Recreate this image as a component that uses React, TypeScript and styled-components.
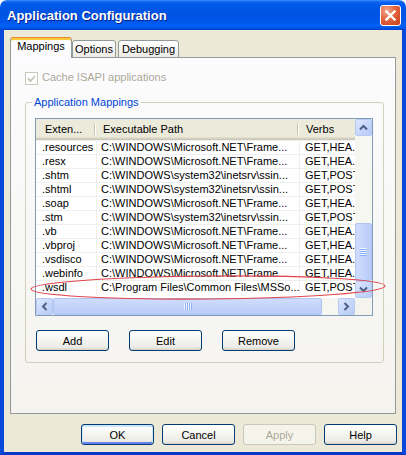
import React from "react";
import styled, { createGlobalStyle, css } from "styled-components";

const GlobalStyle = createGlobalStyle`
  * { box-sizing: border-box; }
  html, body { margin: 0; padding: 0; background: #ffffff; }
  body { font-family: "Liberation Sans", Arial, sans-serif; font-size: 11px; color: #000; }
`;

const FONT = `"Liberation Sans", Arial, sans-serif`;

const Window = styled.div`
  position: relative;
  width: 406px;
  height: 455px;
  display: flex;
  flex-direction: column;
  overflow: hidden;
  border-radius: 7px 7px 0 0;
  font-family: ${FONT};
  font-size: 11px;
`;

const TitleBar = styled.div`
  height: 30px;
  flex: none;
  display: flex;
  align-items: center;
  justify-content: space-between;
  padding: 1px 5px 0 7px;
  background: linear-gradient(
    180deg,
    #3c8ffe 0px,
    #0d62ef 2px,
    #0058ea 5px,
    #0054e3 14px,
    #0057ea 22px,
    #0062f6 26px,
    #0055e6 28px,
    #0040ca 30px
  );
`;

const Title = styled.div`
  font-family: ${FONT};
  font-weight: bold;
  font-size: 13px;
  color: #ffffff;
  text-shadow: 1px 1px 0 #0a1e8c;
`;

const CloseButton = styled.div`
  width: 21px;
  height: 21px;
  border: 1px solid #ffffff;
  border-radius: 3px;
  display: flex;
  align-items: center;
  justify-content: center;
  background: radial-gradient(circle at 30% 25%, #f3a68c 0%, #e2643f 45%, #c8411c 100%);
`;

const Body = styled.div`
  flex: 1;
  display: flex;
  flex-direction: column;
  background: #ece9d8;
  border-left: 4px solid #0849da;
  border-right: 4px solid #0849da;
  border-bottom: 3px solid #0838c8;
  padding: 7px 6px 0 6px;
`;

const TabStrip = styled.div`
  display: flex;
  align-items: flex-end;
  height: 21px;
  margin-bottom: -1px;
`;

const Tab = styled.div<{ $active?: boolean; $w: number; $gap?: number }>`
  position: relative;
  width: ${(p) => p.$w}px;
  margin-left: ${(p) => p.$gap ?? 0}px;
  height: ${(p) => (p.$active ? 21 : 18)}px;
  z-index: ${(p) => (p.$active ? 2 : 0)};
  border: 1px solid #919b9c;
  border-radius: 3px 3px 0 0;
  text-align: center;
  line-height: 13px;
  padding-top: 2px;
  color: #000;
  white-space: nowrap;
  ${(p) =>
    p.$active
      ? css`
          border-bottom: none;
          border-top-color: #e68b2c;
          background: #fcfcfe;
          box-shadow: inset 0 2px 0 #ffc73c;
        `
      : css`
          background: linear-gradient(180deg, #ffffff 0%, #f7f7f4 40%, #ecebe6 100%);
        `}
`;

const TabPanel = styled.div`
  position: relative;
  z-index: 1;
  height: 357px;
  flex: none;
  border: 1px solid #919b9c;
  background: linear-gradient(180deg, #fcfcfe 0%, #f4f3ee 100%);
  padding: 0 0 0 14px;
  display: flex;
  flex-direction: column;
`;

const CheckRow = styled.div`
  margin-top: 14px;
  height: 13px;
  display: flex;
  align-items: flex-start;
`;

const CheckBox = styled.div`
  width: 13px;
  height: 13px;
  flex: none;
  border: 1px solid #cac8bb;
  background: #ffffff;
  display: flex;
  align-items: center;
  justify-content: center;
`;

const CheckLabel = styled.span<{ $disabled?: boolean }>`
  margin-left: 4px;
  line-height: 11px;
  color: ${(p) => (p.$disabled ? "#aca899" : "#000")};
  white-space: nowrap;
`;

const GroupBox = styled.fieldset`
  margin: 10px 0 0 0;
  padding: 0;
  width: 359px;
  height: 268px;
  min-width: 0;
  border: 1px solid #d0d0bf;
  border-radius: 3px;
`;

const GroupLegend = styled.legend`
  margin-left: 6px;
  padding: 0 2px;
  line-height: 14px;
  font-size: 11px;
  color: #0046d5;
`;

const GroupInner = styled.div`
  padding: 9px 0 0 9px;
  display: flex;
  flex-direction: column;
`;

const ListView = styled.div`
  width: 338px;
  height: 198px;
  border: 1px solid #7f9db9;
  background: #ffffff;
  display: grid;
  grid-template-columns: 319px 17px;
  grid-template-rows: 179px 17px;
`;

const DataArea = styled.div`
  overflow: hidden;
  display: flex;
  flex-direction: column;
`;

const HeaderRow = styled.div`
  display: flex;
  flex: none;
  height: 21px;
  background: #ebeadb;
  box-shadow: inset 0 -1px 0 #cbc7b8, inset 0 -2px 0 #d6d2c2, inset 0 -3px 0 #e2decd;
`;

const HeaderCell = styled.div<{ $w?: number; $pad: number; $sep?: boolean }>`
  position: relative;
  flex: none;
  width: ${(p) => (p.$w ? `${p.$w}px` : "auto")};
  padding: 3px 0 0 ${(p) => p.$pad}px;
  line-height: 14px;
  white-space: nowrap;
  ${(p) =>
    p.$sep &&
    css`
      &::after {
        content: "";
        position: absolute;
        right: 2px;
        top: 4px;
        bottom: 5px;
        width: 1px;
        background: #c7c5b2;
        box-shadow: 1px 0 0 #ffffff;
      }
    `}
`;

const Row = styled.div`
  display: flex;
  flex: none;
  height: 14px;
  border-top: 1px solid #efefef;
`;

const Cell = styled.div<{ $w?: number; $pad: number; $grid?: boolean }>`
  flex: none;
  width: ${(p) => (p.$w ? `${p.$w}px` : "auto")};
  padding-left: ${(p) => p.$pad}px;
  line-height: 13px;
  white-space: nowrap;
  overflow: ${(p) => (p.$grid ? "hidden" : "visible")};
  border-right: ${(p) => (p.$grid ? "1px solid #efefef" : "none")};
`;

const VScroll = styled.div`
  display: flex;
  flex-direction: column;
  background: #f7f7f2;
`;

const HScroll = styled.div`
  display: flex;
  flex-direction: row;
  background: #f7f7f2;
`;

const Corner = styled.div`
  background: #f4f3ee;
`;

const ScrollButton = styled.div`
  width: 17px;
  height: 17px;
  flex: none;
  display: flex;
  align-items: center;
  justify-content: center;
  border: 1px solid #b7caf4;
  border-radius: 2px;
  background: linear-gradient(135deg, #dde7fe 0%, #c8d8fc 50%, #b7cbf7 100%);
`;

const Track = styled.div<{ $vertical?: boolean }>`
  flex: 1;
  display: flex;
  flex-direction: ${(p) => (p.$vertical ? "column" : "row")};
  justify-content: ${(p) => (p.$vertical ? "flex-end" : "flex-start")};
`;

const Thumb = styled.div<{ $vertical?: boolean; $size: number }>`
  flex: none;
  ${(p) =>
    p.$vertical
      ? css`
          height: ${p.$size}px;
          background: linear-gradient(90deg, #cfdcfd 0%, #c3d4fb 50%, #b8ccf8 100%);
        `
      : css`
          width: ${p.$size}px;
          background: linear-gradient(180deg, #cfdcfd 0%, #c3d4fb 50%, #b8ccf8 100%);
        `}
  border: 1px solid #b1c5f3;
  border-radius: 2px;
  display: flex;
  align-items: center;
  justify-content: center;
`;

const Grip = styled.div<{ $vertical?: boolean }>`
  width: ${(p) => (p.$vertical ? 7 : 8)}px;
  height: ${(p) => (p.$vertical ? 8 : 7)}px;
  background: repeating-linear-gradient(
    ${(p) => (p.$vertical ? "180deg" : "90deg")},
    #eef4fe 0px,
    #eef4fe 1px,
    #8cb0f8 1px,
    #8cb0f8 2px
  );
`;

const ButtonRow = styled.div`
  display: flex;
  gap: 20px;
  margin-top: 14px;
  padding-left: 1px;
`;

const Footer = styled.div`
  display: flex;
  justify-content: flex-end;
  gap: 8px;
  margin-top: 10px;
  margin-right: -1px;
`;

const Button = styled.button<{ $default?: boolean }>`
  width: 73px;
  height: 21px;
  padding: 0;
  font-family: ${FONT};
  font-size: 11px;
  color: #000;
  border: 1px solid #003c74;
  border-radius: 3px;
  background: linear-gradient(180deg, #ffffff 0%, #f5f5f1 45%, #ecebe6 85%, #d8d2c6 100%);
  ${(p) =>
    p.$default &&
    css`
      box-shadow: inset 0 1px 0 1px #cee7ff, inset 0 -1px 0 1px #6982ee;
    `}
  &:disabled {
    border-color: #c9c7ba;
    background: #f5f4ea;
    color: #aca899;
    box-shadow: none;
  }
`;

const Annotation = styled.svg`
  position: absolute;
  left: 0;
  top: 0;
  width: 406px;
  height: 455px;
  pointer-events: none;
  z-index: 10;
`;

type Dir = "up" | "down" | "left" | "right";
const rot: Record<Dir, number> = { up: 0, right: 90, down: 180, left: 270 };

function Arrow({ dir }: { dir: Dir }) {
  return (
    <svg width="9" height="9" viewBox="0 0 9 9" style={{ transform: `rotate(${rot[dir]}deg)` }}>
      <polyline points="1,6.5 4.5,3 8,6.5" fill="none" stroke="#4d6185" strokeWidth="2" />
    </svg>
  );
}

const NET = "C:\\WINDOWS\\Microsoft.NET\\Frame...";
const SYS = "C:\\WINDOWS\\system32\\inetsrv\\ssin...";
const HEA = "GET,HEA...";
const POS = "GET,POST";

const rows: [string, string, string][] = [
  [".resources", NET, HEA],
  [".resx", NET, HEA],
  [".shtm", SYS, POS],
  [".shtml", SYS, POS],
  [".soap", NET, HEA],
  [".stm", SYS, POS],
  [".vb", NET, HEA],
  [".vbproj", NET, HEA],
  [".vsdisco", NET, HEA],
  [".webinfo", NET, HEA],
  [".wsdl", "C:\\Program Files\\Common Files\\MSSo...", POS],
];

export default function App() {
  return (
    <>
      <GlobalStyle />
      <Window>
        <TitleBar>
          <Title>Application Configuration</Title>
          <CloseButton>
            <svg width="11" height="11" viewBox="0 0 11 11">
              <path d="M1.5 1.5 L9.5 9.5 M9.5 1.5 L1.5 9.5" stroke="#ffffff" strokeWidth="2.3" strokeLinecap="square" />
            </svg>
          </CloseButton>
        </TitleBar>
        <Body>
          <TabStrip>
            <Tab $active $w={62}>Mappings</Tab>
            <Tab $w={44}>Options</Tab>
            <Tab $w={61} $gap={2}>Debugging</Tab>
          </TabStrip>
          <TabPanel>
            <CheckRow>
              <CheckBox>
                <svg width="9" height="9" viewBox="0 0 9 9">
                  <polyline points="1,4.5 3.5,7 8,2" fill="none" stroke="#c4c2b4" strokeWidth="1.8" />
                </svg>
              </CheckBox>
              <CheckLabel $disabled>Cache ISAPI applications</CheckLabel>
            </CheckRow>
            <GroupBox>
              <GroupLegend>Application Mappings</GroupLegend>
              <GroupInner>
                <ListView>
                  <DataArea>
                    <HeaderRow>
                      <HeaderCell $w={61} $pad={9} $sep>Exten...</HeaderCell>
                      <HeaderCell $w={203} $pad={6} $sep>Executable Path</HeaderCell>
                      <HeaderCell $pad={6}>Verbs</HeaderCell>
                    </HeaderRow>
                    {rows.map(([ext, path, verbs]) => (
                      <Row key={ext}>
                        <Cell $w={61} $pad={6} $grid>{ext}</Cell>
                        <Cell $w={203} $pad={4} $grid>{path}</Cell>
                        <Cell $pad={5}>{verbs}</Cell>
                      </Row>
                    ))}
                  </DataArea>
                  <VScroll>
                    <ScrollButton><Arrow dir="up" /></ScrollButton>
                    <Track $vertical>
                      <Thumb $vertical $size={58}><Grip $vertical /></Thumb>
                    </Track>
                    <ScrollButton><Arrow dir="down" /></ScrollButton>
                  </VScroll>
                  <HScroll>
                    <ScrollButton><Arrow dir="left" /></ScrollButton>
                    <Track>
                      <Thumb $size={269}><Grip /></Thumb>
                    </Track>
                    <ScrollButton><Arrow dir="right" /></ScrollButton>
                  </HScroll>
                  <Corner />
                </ListView>
                <ButtonRow>
                  <Button>Add</Button>
                  <Button>Edit</Button>
                  <Button>Remove</Button>
                </ButtonRow>
              </GroupInner>
            </GroupBox>
          </TabPanel>
          <Footer>
            <Button $default>OK</Button>
            <Button>Cancel</Button>
            <Button disabled>Apply</Button>
            <Button>Help</Button>
          </Footer>
        </Body>
        <Annotation viewBox="0 0 406 455">
          <ellipse cx="208" cy="287.5" rx="177" ry="11.5" fill="none" stroke="#e2444c" strokeWidth="1.1" transform="rotate(-0.5 208 287.5)" />
        </Annotation>
      </Window>
    </>
  );
}
